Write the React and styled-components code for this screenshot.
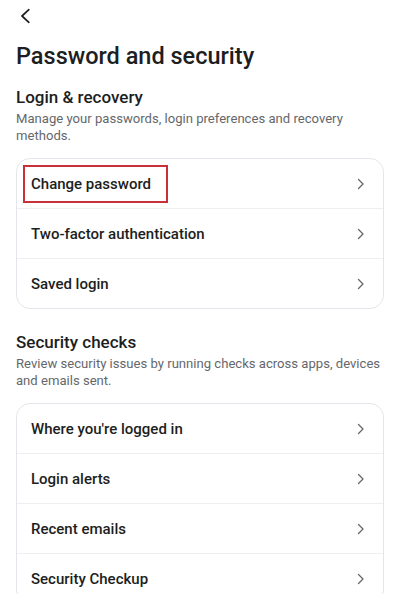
import styled, { createGlobalStyle } from "styled-components"

const GlobalStyle = createGlobalStyle`
	body {
		margin: 0;
		background: #fff;
		font-family: Roboto, "Noto Sans", sans-serif;
		color: #1c1e21;
	}
`;

const sections = [
	{
		title: "Login & recovery",
		desc: "Manage your passwords, login preferences and recovery methods.",
		items: ["Change password", "Two-factor authentication", "Saved login"],
		marked: "Change password",
	},
	{
		title: "Security checks",
		desc: "Review security issues by running checks across apps, devices and emails sent.",
		items: ["Where you're logged in", "Login alerts", "Recent emails", "Security Checkup"],
	},
];

const Chevron = ({ size = 14, dir = "right" }) => (
	<svg width={size} height={size} viewBox="0 0 14 14" fill="none">
		{dir === "right" ? (
			<path d="M4.5 2.5 L9 7 L4.5 11.5" stroke="#65676b" strokeWidth="1.3" strokeLinecap="round" strokeLinejoin="round" />
		) : (
			<path d="M9.5 1.5 L3.5 7 L9.5 12.5" stroke="#1c1e21" strokeWidth="1.5" strokeLinecap="round" strokeLinejoin="round" />
		)}
	</svg>
);

export default function App() {
	return (
		<Page>
			<GlobalStyle />
			<TopBar>
				<Chevron size={16} dir="left" />
			</TopBar>
			<Title>Password and security</Title>
			{sections.map(section => (
				<Section key={section.title}>
					<SectionTitle>{section.title}</SectionTitle>
					<SectionDesc>{section.desc}</SectionDesc>
					<Card>
						{section.items.map(item => (
							<Row key={item}>
								<RowLabel $marked={item === section.marked}>{item}</RowLabel>
								<Chevron />
							</Row>
						))}
					</Card>
				</Section>
			))}
		</Page>
	)
}

const Page = styled.div`
	width: 400px;
	height: 594px;
	overflow: hidden;
	padding: 0 16px;
	box-sizing: border-box;
`;

const TopBar = styled.div`
	height: 32px;
	display: flex;
	align-items: center;
	padding-left: 2px;
`;

const Title = styled.h1`
	margin: 8px 0 0;
	font-size: 23.5px;
	font-weight: 500;
	line-height: 32px;
`;

const Section = styled.section`
	margin-top: 14px;

	& + & {
		margin-top: 22px;
	}
`;

const SectionTitle = styled.h2`
	margin: 0;
	font-size: 17px;
	font-weight: 500;
	line-height: 22px;
`;

const SectionDesc = styled.p`
	margin: 2px 0 0;
	font-size: 13.1px;
	line-height: 17px;
	color: #65676b;
`;

const Card = styled.div`
	margin-top: 14px;
	border: 1px solid #e4e6eb;
	border-radius: 14px;
	overflow: hidden;
`;

const Row = styled.div`
	height: 49px;
	display: flex;
	align-items: center;
	justify-content: space-between;
	padding: 0 15px 0 14px;

	& + & {
		border-top: 1px solid #eceef1;
	}
`;

const RowLabel = styled.span`
	font-size: 15px;
	font-weight: 500;
	line-height: 18px;
	padding: 8px 15px 8px 6px;
	margin-left: -8px;
	border: 2px solid ${p => (p.$marked ? "#c9303a" : "transparent")};
`;
